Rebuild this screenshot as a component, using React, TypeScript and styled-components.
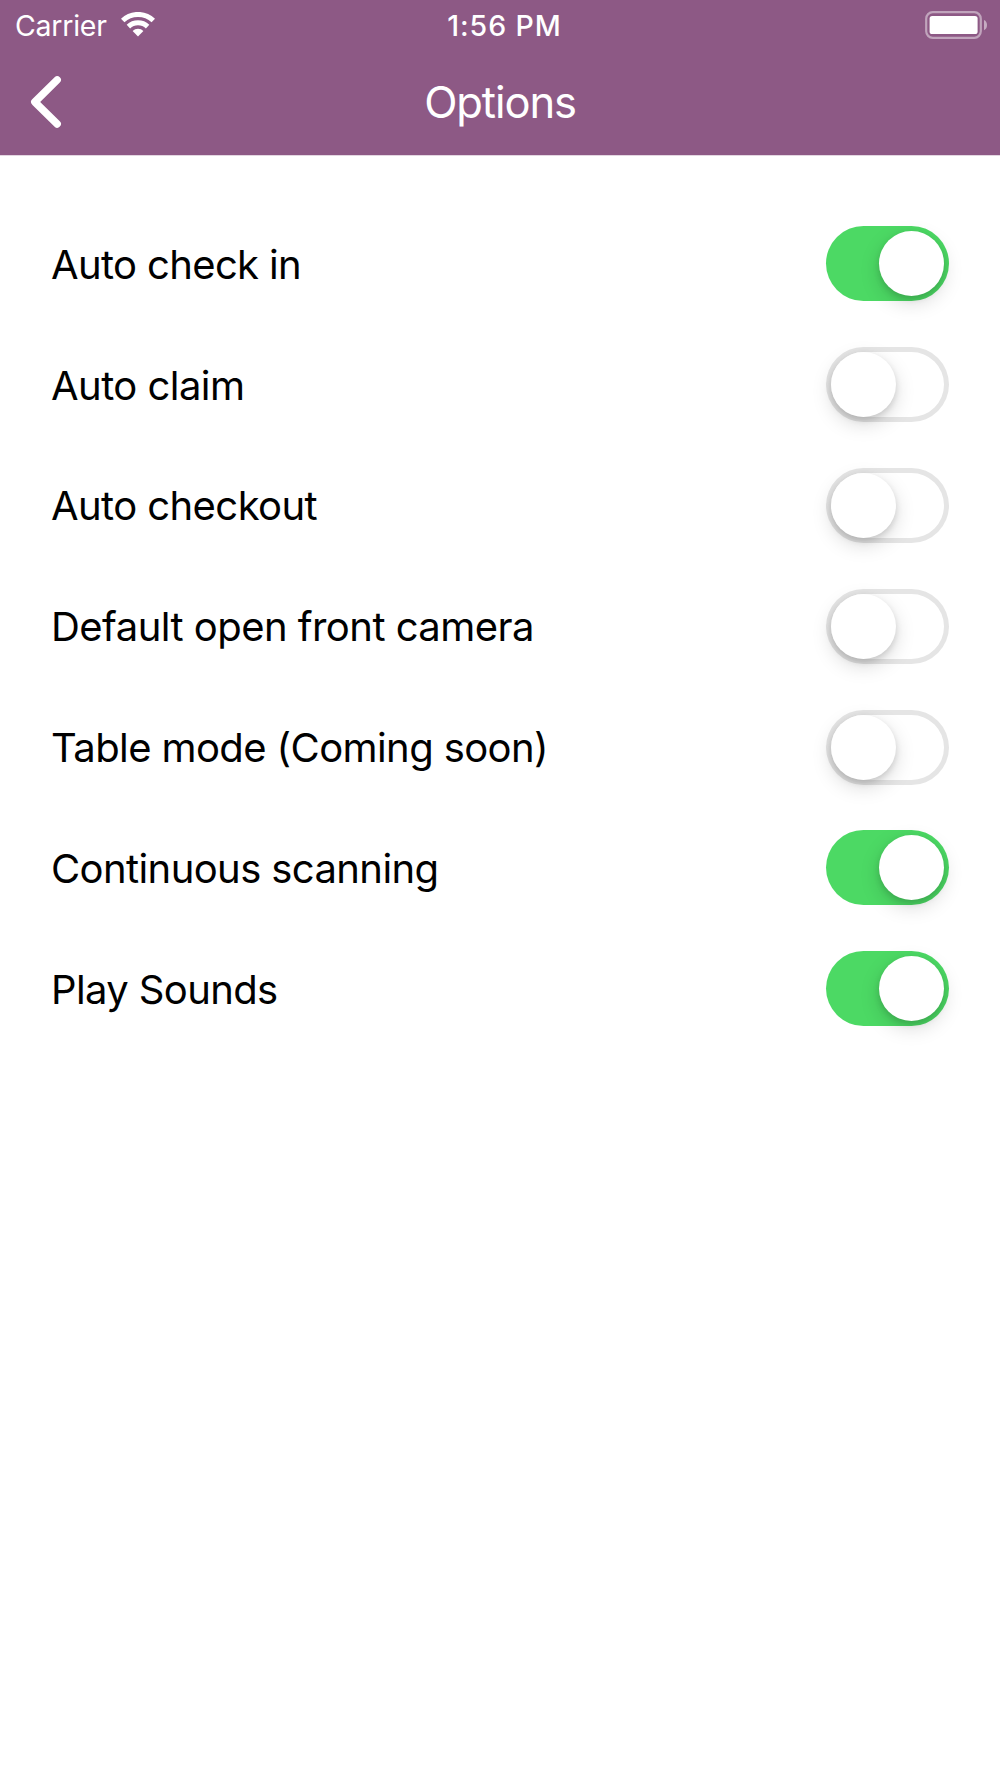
import React, { useState } from "react";
import styled, { createGlobalStyle } from "styled-components";

const GlobalStyle = createGlobalStyle`
  *, *::before, *::after { box-sizing: border-box; }
  body {
    margin: 0;
    background: #fff;
    font-family: Inter, "Liberation Sans", sans-serif;
  }
`;

const Screen = styled.div`
  display: flex;
  flex-direction: column;
  min-height: 1778px;
  background: #fff;
`;

const Header = styled.header`
  height: 156px;
  background: #8d5985;
  border-bottom: 1px solid #e3d6e1;
  color: #fff;
`;

const StatusBar = styled.div`
  display: grid;
  grid-template-columns: 1fr auto 1fr;
  align-items: center;
  height: 50px;
  padding: 0 12px 1px 15px;
`;

const Network = styled.div`
  display: flex;
  align-items: center;
  gap: 14px;
`;

const Carrier = styled.span`
  padding-top: 2px;
  font-size: 28.5px;
  line-height: 46px;
  letter-spacing: -0.25px;
`;

const Clock = styled.time`
  padding: 2px 0 0 6px;
  font-size: 28.5px;
  line-height: 46px;
  font-weight: 500;
  letter-spacing: 0.95px;
`;

const BatterySlot = styled.div`
  display: flex;
  justify-content: flex-end;
`;

const NavBar = styled.nav`
  display: grid;
  grid-template-columns: 100px 1fr 100px;
  align-items: center;
  height: 104px;
`;

const BackButton = styled.button`
  display: flex;
  width: 100px;
  height: 104px;
  padding: 0;
  border: 0;
  background: none;
`;

const Title = styled.h1`
  margin: 0;
  text-align: center;
  font-size: 43.5px;
  font-weight: 400;
  line-height: 104px;
  letter-spacing: -1.1px;
`;

const OptionList = styled.ul`
  margin: 0;
  padding: 47.35px 51px 0 51px;
  list-style: none;
`;

const OptionRow = styled.li`
  display: flex;
  align-items: center;
  justify-content: space-between;
  height: 120.83px;
`;

const Label = styled.span<{ $tracking: number }>`
  padding-top: 2px;
  font-size: 40px;
  line-height: 48px;
  white-space: nowrap;
  color: #000;
  letter-spacing: ${(p) => p.$tracking}px;
`;

const Track = styled.button<{ $on: boolean }>`
  display: flex;
  align-items: center;
  justify-content: ${(p) => (p.$on ? "flex-end" : "flex-start")};
  width: 123px;
  height: 75px;
  padding: 0 5px;
  border: 0;
  border-radius: 38px;
  background: ${(p) => (p.$on ? "#4cd964" : "#fff")};
  box-shadow: ${(p) => (p.$on ? "none" : "inset 0 0 0 5px #e5e5e5")};
`;

const Knob = styled.span`
  width: 65px;
  height: 65px;
  border-radius: 50%;
  background: #fff;
  box-shadow: 0 7px 20px rgba(0, 0, 0, 0.15), 0 3px 6px rgba(0, 0, 0, 0.13);
`;

const WifiIcon = () => (
  <svg width="34" height="25" viewBox="0 0 34 25" fill="none" stroke="#fff" strokeWidth="5">
    <path d="M1.7 8.5a22.3 22.3 0 0 1 30.6 0" />
    <path d="M7.4 14.6a14 14 0 0 1 19.2 0" />
    <path d="M17 24.6L11.6 19.100a7.600 7.600 0 0 1 10.800 0Z" fill="#fff" stroke="none" />
  </svg>
);

const BatteryIcon = () => (
  <svg width="63" height="28" viewBox="0 0 63 28">
    <rect x="1.2" y="1.2" width="54.6" height="25.6" rx="6.5" fill="none" stroke="#fff" strokeOpacity=".45" strokeWidth="2.2" />
    <rect x="4.6" y="5" width="48" height="18" rx="2.6" fill="#fff" />
    <path d="M59 9c4 1.6 4 8.6 0 10.200Z" fill="#fff" fillOpacity=".5" />
  </svg>
);

const ChevronIcon = () => (
  <svg width="100" height="104" viewBox="0 50 100 104" fill="none">
    <path d="M57.200 79.800L34.800 102l22.400 22" stroke="#fff" strokeWidth="7.4" strokeLinecap="round" strokeLinejoin="round" />
  </svg>
);

const OPTIONS = [
  { label: "Auto check in", on: true, tracking: -0.64 },
  { label: "Auto claim", on: false, tracking: -0.54 },
  { label: "Auto checkout", on: false, tracking: -0.58 },
  { label: "Default open front camera", on: false, tracking: -0.54 },
  { label: "Table mode (Coming soon)", on: false, tracking: -0.6 },
  { label: "Continuous scanning", on: true, tracking: -0.6 },
  { label: "Play Sounds", on: true, tracking: -0.62 },
];

export default function App() {
  const [values, setValues] = useState(OPTIONS.map((o) => o.on));
  const toggle = (index: number) =>
    setValues((current) => current.map((v, i) => (i === index ? !v : v)));

  return (
    <>
      <GlobalStyle />
      <Screen>
        <Header>
          <StatusBar>
            <Network>
              <Carrier>Carrier</Carrier>
              <WifiIcon />
            </Network>
            <Clock>1:56 PM</Clock>
            <BatterySlot>
              <BatteryIcon />
            </BatterySlot>
          </StatusBar>
          <NavBar>
            <BackButton aria-label="Back">
              <ChevronIcon />
            </BackButton>
            <Title>Options</Title>
          </NavBar>
        </Header>
        <OptionList>
          {OPTIONS.map((option, i) => (
            <OptionRow key={option.label}>
              <Label $tracking={option.tracking}>{option.label}</Label>
              <Track
                role="switch"
                aria-checked={values[i]}
                aria-label={option.label}
                $on={values[i]}
                onClick={() => toggle(i)}
              >
                <Knob />
              </Track>
            </OptionRow>
          ))}
        </OptionList>
      </Screen>
    </>
  );
}
